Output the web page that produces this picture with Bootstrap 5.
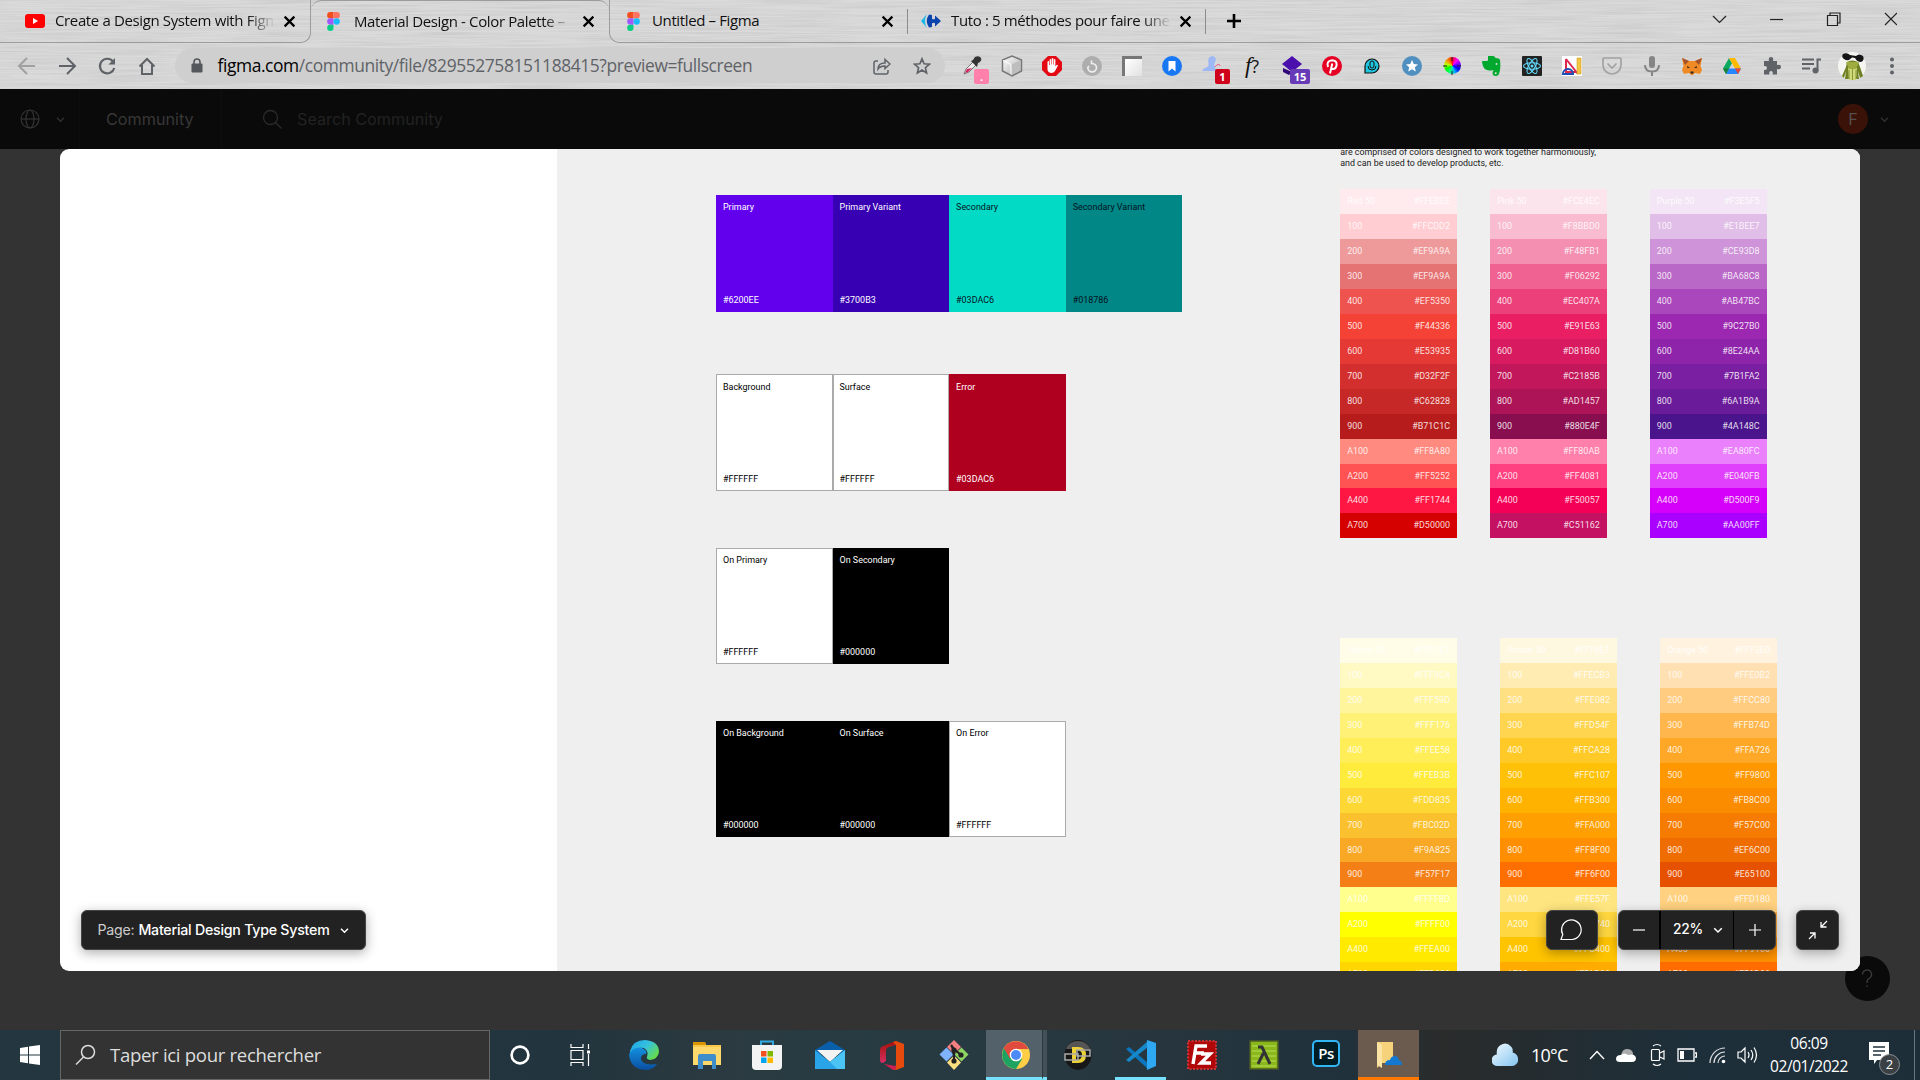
<!DOCTYPE html>
<html lang="fr">
<head>
<meta charset="utf-8">
<title>Material Design - Color Palette – Figma</title>
<link href="https://cdn.jsdelivr.net/npm/bootstrap@5.3.0/dist/css/bootstrap.min.css" rel="stylesheet">
<style>
body{width:1920px;height:1080px;overflow:hidden;background:#333;font-family:"Open Sans","Noto Sans",sans-serif;line-height:1}
svg{display:block;flex:none}
.no-shrink>*{flex:none}
.browser{height:89px;background:#dadada;isolation:isolate}
.metal{inset:0;z-index:-1}
.tabstrip{height:43px}
.tab{height:43px;border-bottom:1px solid #9c9c9c;font-size:15px;letter-spacing:-.37px;color:#111;white-space:nowrap}
.tab-prev{width:311px;border-right:1px solid #9c9c9c;border-bottom-right-radius:10px;padding-left:25px}
.tab-on{width:298px;border-top:1px solid #9c9c9c;border-bottom-color:transparent;border-radius:10px 10px 0 0;padding-left:16px}
.tab-next{width:299px;border-left:1px solid #9c9c9c;border-bottom-left-radius:10px;padding-left:13px}
.tab-last{width:298px;padding-left:13px}
.tab-fill{border-bottom:1px solid #9c9c9c;height:43px}
.tab-name{overflow:hidden;width:218px;height:24px;line-height:22px;margin-left:10px}
.fade-end{-webkit-mask-image:linear-gradient(90deg,#000 88%,transparent 101%)}
.tab-rule{width:1px;height:25px;background:#8c8c8c}
.toolbar{height:45px}
.slot{width:40px;height:40px;display:flex;align-items:center;justify-content:center;position:relative;flex:none}
.pill{width:770px;height:35px;border-radius:18px;background:#cfcfcf;font-size:17.4px;letter-spacing:-.4px;color:#5f6368}
.ext-badge{position:absolute;left:22px;top:23px;height:15px;border-radius:2px;color:#fff;font:bold 11px/15px "Open Sans",sans-serif;text-align:center}
.fignav{height:60px;background:#0a0a0a;font-family:Inter,sans-serif;font-size:16.2px;color:#303030}
.fignav .nav-rule{width:1px;height:60px;background:#0e0e0e}
.face{width:30px;height:30px;border-radius:50%;background:#3b1208;color:#55504e}
.stage{height:881px}
.help{position:absolute;left:1844.5px;top:807px;width:45px;height:45px;border-radius:50%;background:#0a0a0a}
.viewer{width:1800px;height:822px;margin-left:60px;background:#fff;border-radius:9px;overflow:hidden;font-family:Roboto,sans-serif;font-size:8.95px}
.blank{width:497px}
.sheet{background:#efefef;padding-left:159.3px;flex:1}
.swatches{width:466px;padding-top:46.3px;margin-right:157.9px}
.sw{width:116.55px;height:116.7px;padding:8.2px 6.7px 7.5px}
.sw-line{box-shadow:inset 0 0 0 1px #aaa}
.gap-a{margin-bottom:62.4px}.gap-b{margin-bottom:56.5px}
.intro{margin-top:-1.6px;line-height:10.4px;font-size:8.9px;color:#222;white-space:nowrap}
.pal{width:116.8px;color:rgba(255,255,255,.86)}
.spread>.pal:last-child{margin-left:10px}
.tone{height:24.95px;padding:0 7px;line-height:24.7px;display:flex;justify-content:space-between}
.float-btn{position:absolute;top:761px;height:40px;background:#222;border-radius:6px;border:1px solid #454545;box-shadow:0 3px 12px rgba(0,0,0,.32);color:#fff;font-family:Inter,sans-serif;font-size:14.2px}
.float-btn .cell{height:38px;display:flex;align-items:center;justify-content:center}
.zoom-cell{width:75px;border:solid #000;border-width:0 1px 0 2px;padding-left:4px;font-size:13.8px;font-weight:500;letter-spacing:-.3px}
.taskbar{height:50px;background:linear-gradient(90deg,#243740 0,#22343d 30%,#2b3a40 37%,#273b43 45%,#27363e 60%,#20313c 70%,#2a2c2b 75%,#242c30 80%,#1d2f3a 88%,#1e2e38 100%);color:#fff}
.find{width:430px;height:50px;background:#333;border:1px solid #666;font-size:18.6px;letter-spacing:-.32px;color:#ddd}
.app{width:62px;height:50px;display:flex;align-items:center;justify-content:center;flex:none}
.app-on{border-bottom:3px solid #76e0ff;padding-top:3px}
.tray{height:50px;position:relative}
.tray>svg,.tray>span{flex:none}
.clock{width:90px;font-size:15.5px;line-height:23px;letter-spacing:-.45px}
.count{position:absolute;left:10px;top:12px;width:21px;height:21px;border-radius:50%;background:#3a4044;border:1px solid #8b9094;font-size:13px;line-height:19px;text-align:center}
</style>
<script src="https://cdn.jsdelivr.net/npm/bootstrap@5.3.0/dist/js/bootstrap.bundle.min.js"></script>
</head>
<body class="d-flex flex-column">

<svg width="0" height="0" class="position-absolute">
  <defs>
    <symbol id="figma" viewBox="0 0 20 30"><path fill="#f24e1e" d="M10 0H5a5 5 0 0 0 0 10h5z"/><path fill="#ff7262" d="M10 0h5a5 5 0 0 1 0 10h-5z"/><path fill="#a259ff" d="M10 10H5a5 5 0 0 0 0 10h5z"/><circle cx="15" cy="15" r="5" fill="#1abcfe"/><path fill="#0acf83" d="M5 20h5v5a5 5 0 1 1-5-5z"/></symbol>
    <symbol id="cross" viewBox="0 0 12 12"><path d="M1.500 1.500l9 9M10.500 1.500l-9 9" stroke="#000" stroke-width="2" fill="none"/></symbol>
    <symbol id="chev" viewBox="0 0 10 10"><path d="M2.300 3.700L5 6.400l2.700-2.700" stroke="currentColor" stroke-width="1.100" fill="none"/></symbol>
    <filter id="brushed" x="0" y="0" width="100%" height="100%"><feTurbulence type="fractalNoise" baseFrequency="0.012 0.55" numOctaves="3" seed="4"/><feColorMatrix values="0 0 0 0 .5  0 0 0 0 .5  0 0 0 0 .5  .9 0 0 0 -.3"/></filter>
    <linearGradient id="edgeA" x1="0" y1="0" x2="1" y2=".6"><stop offset="0" stop-color="#1ba4e8"/><stop offset=".55" stop-color="#35c2df"/><stop offset="1" stop-color="#63dc50"/></linearGradient>
    <linearGradient id="edgeB" x1="0" y1="0" x2="0" y2="1"><stop offset="0" stop-color="#1490df"/><stop offset="1" stop-color="#0a4ea0"/></linearGradient>
    <linearGradient id="cube" x1="0" y1="0" x2="1" y2="1"><stop offset="0" stop-color="#fff"/><stop offset="1" stop-color="#aaa"/></linearGradient>
    <linearGradient id="sky" x1="0" y1="0" x2="1" y2="1"><stop offset="0" stop-color="#f4fbff"/><stop offset="1" stop-color="#83c4f0"/></linearGradient>
    <linearGradient id="off" x1="0" y1="0" x2="0" y2="1"><stop offset="0" stop-color="#a41208"/><stop offset="1" stop-color="#d62f64"/></linearGradient>
  </defs>
</svg>

<header class="browser position-relative flex-shrink-0">
  <svg class="metal position-absolute" width="1920" height="89"><rect width="1920" height="89" filter="url(#brushed)"/></svg>

  <div class="tabstrip d-flex align-items-center no-shrink">
    <div class="tab tab-prev d-flex align-items-center">
      <svg width="20" height="14" viewBox="0 0 20 14"><rect width="20" height="14" rx="3" fill="#f00"/><path d="M8 4l5 3-5 3z" fill="#fff"/></svg>
      <span class="tab-name fade-end">Create a Design System with Figma</span>
      <svg width="13" height="13" style="margin-left:10px"><use href="#cross"/></svg>
    </div>
    <div class="tab tab-on d-flex align-items-center">
      <svg width="13" height="19"><use href="#figma"/></svg>
      <span class="tab-name fade-end" style="width:216px;margin-left:14px">Material Design - Color Palette –</span>
      <svg width="13" height="13" style="margin-left:12px"><use href="#cross"/></svg>
    </div>
    <div class="tab tab-next d-flex align-items-center">
      <svg class="ms-1" width="13" height="19"><use href="#figma"/></svg>
      <span class="tab-name ms-2 ps-1">Untitled – Figma</span>
      <svg width="13" height="13" style="margin-left:15px"><use href="#cross"/></svg>
      <span class="tab-rule ms-auto"></span>
    </div>
    <div class="tab tab-last d-flex align-items-center">
      <svg width="20" height="14" viewBox="0 0 20 14"><path d="M6 0L0 7l6 7q-4-7 0-14z" fill="#1ab7ea"/><path d="M8 .5q-4.500 6.500 0 13l3-.5V9.200q2-1 3 0v3.300l6-5.500-6-5.500v3.300q-1 1-3 0V1z" fill="#0b44ad"/></svg>
      <span class="tab-name fade-end">Tuto : 5 méthodes pour faire une c</span>
      <svg width="13" height="13" style="margin-left:10px"><use href="#cross"/></svg>
      <span class="tab-rule ms-auto"></span>
    </div>
    <div class="tab-fill flex-grow-1 d-flex align-items-center">
      <svg width="16" height="16" style="margin-left:20px"><path d="M8 1v14M1 8h14" stroke="#000" stroke-width="2.600"/></svg>
      <svg class="ms-auto" width="200" height="30" style="margin-right:23px;margin-bottom:4px" fill="none" stroke="#222" stroke-width="1.200"><path d="M16 12l6.500 6.500 6.500-6.500"/><path d="M73 15.500h13"/><path d="M130.500 11.500h10v10h-10zM133 11.500v-2.500h10v10h-2.500"/><path d="M188 9l12 12M200 9L188 21"/></svg>
    </div>
  </div>

  <div class="toolbar d-flex align-items-center no-shrink">
    <div class="d-flex" style="margin-left:7px">
      <span class="slot"><svg width="20" height="20" fill="none" stroke="#a0a0a0" stroke-width="2"><path d="M18 10H3M10 2l-8 8 8 8"/></svg></span>
      <span class="slot"><svg width="20" height="20" fill="none" stroke="#5f6368" stroke-width="2"><path d="M2 10h15M10 2l8 8-8 8"/></svg></span>
      <span class="slot"><svg width="20" height="20" fill="none" stroke="#5f6368" stroke-width="2.200"><path d="M16 5.500A7.300 7.300 0 1 0 17.300 12"/><path d="M18 2v6.500h-6.500z" fill="#5f6368" stroke="none"/></svg></span>
      <span class="slot"><svg width="18" height="18" fill="none" stroke="#5f6368" stroke-width="2"><path d="M1.500 9.500L9 2l7.500 7.500M4 8v9h10V8"/></svg></span>
    </div>
    <div class="pill d-flex align-items-center ms-2">
      <svg width="12" height="15" style="margin-left:16px"><path d="M3 6V4a3 3 0 0 1 6 0v2" fill="none" stroke="#54575c" stroke-width="1.600"/><rect x=".5" y="5.500" width="11" height="9" rx="1" fill="#54575c"/></svg>
      <span class="text-nowrap" style="margin-left:14.500px"><span class="text-black">figma.com</span>/community/file/829552758151188415?preview=fullscreen</span>
      <span class="ms-auto d-flex" style="margin-right:3px"><span class="slot"><svg width="18" height="18" fill="none" stroke="#5f6368" stroke-width="1.500"><path d="M5 4H3a2 2 0 0 0-2 2v9a2 2 0 0 0 2 2h10a2 2 0 0 0 2-2v-2M5 12c0-4 3-6 7-6V2.500l5 4.500-5 4.500V9c-3 0-5 0-7 3z"/></svg></span>
      <span class="slot"><svg width="18" height="18" fill="none" stroke="#5f6368" stroke-width="1.700"><path d="M9 1.800l2.100 5 5.300.4-4 3.500 1.200 5.200L9 13.100l-4.600 2.800 1.200-5.200-4-3.500 5.300-.4z"/></svg></span></span>
    </div>
    <div class="d-flex" style="margin-left:7px">
      <span class="slot"><svg width="20" height="20"><path d="M2 18l2-5 7-7 3 3-7 7z" fill="#eee" stroke="#777"/><path d="M3 17l2-4 5-1-4 4z" fill="#d6215c"/><path d="M9 5l2-1 2-3q4-2 6 1 1 2-1 4l-2 1-1 4z" fill="#333"/></svg><span class="ext-badge" style="width:15px;background:#ff80ab">.</span></span>
      <span class="slot"><svg width="22" height="22"><path d="M11 1l9.500 4v11L11 21l-9.500-5V5z" fill="url(#cube)" stroke="#777" stroke-width="1.500"/><path d="M10 9.500l9.500-4v10L10 20z" fill="#bdbdbd"/><path d="M2 5.500l8 4v10" stroke="#fff" fill="none"/></svg></span>
      <span class="slot"><svg width="20" height="20"><path d="M6 0h8l6 6v8l-6 6H6l-6-6V6z" fill="#e30b13"/><path d="M5.500 10V5.500q1-1 1.500 0V9h.6V3.500q.9-1 1.600 0V8.500h.5V2.600q.9-1 1.600 0v6h.5v-5q1-1 1.600 0v7l1.500-1.800q1.500 0 .8 1.200L13 15q-1 2-4 2-3.500-.5-3.500-4z" fill="#fff"/></svg></span>
      <span class="slot"><svg width="20" height="20"><circle cx="10" cy="10" r="10" fill="#adadad"/><path d="M9.500 4.500v3q5 .5 5 4a4.300 4.300 0 0 1-8.700 0L7 10" fill="none" stroke="#eee" stroke-width="1.700"/></svg></span>
      <span class="slot"><svg width="20" height="20"><path d="M0 0h20v3H3v17H0z" fill="#777"/><rect x="3" y="3" width="17" height="17" fill="url(#cube)"/><rect x="3" y="3" width="17" height="17" fill="#fff" opacity=".65"/></svg></span>
      <span class="slot"><svg width="20" height="20"><circle cx="10" cy="10" r="10" fill="#1877f2"/><path d="M6.500 5h7v10.500L10 12.500l-3.500 3z" fill="#fff"/></svg></span>
      <span class="slot"><svg width="20" height="20"><path d="M10 0q5 1 3.500 5-2 4-.5 6l1 4H0q1-3 4-3.500Q7 11 6.500 8 5 1 10 0z" fill="#9db8f5"/><path d="M13 11q4-5 5-1" fill="none" stroke="#e58"/></svg><span class="ext-badge" style="left:23px;width:15px;background:#d0021b">1</span></span>
      <span class="slot" style="font:italic 23px/1 'Liberation Serif',serif;color:#111">f<span style="font:18px/1 'Open Sans',sans-serif">?</span></span>
      <span class="slot"><svg width="20" height="20"><path d="M10 0l10 8-10 8L0 8z" fill="#4b0fae"/><path d="M1 12l9 4-3 3-6-3z" fill="#31087c"/></svg><span class="ext-badge" style="left:18px;width:20px;background:#673ab7">15</span></span>
      <span class="slot"><svg width="20" height="20"><circle cx="10" cy="10" r="10" fill="#e60023"/><path d="M6 11Q4 5 10 4.200q5 .3 4.600 4.800-.6 4-3.600 4-1.500 0-2-1M10.300 7.500L8 17.500" stroke="#fff" stroke-width="2" fill="none"/></svg></span>
      <span class="slot"><svg width="16" height="16"><path d="M1 15V8a7 7 0 1 1 7 7z" fill="#21c5df" stroke="#111" stroke-width="1.200"/><rect x="6" y="3" width="4" height="7" rx="2" fill="none" stroke="#111"/><path d="M4 8q0 4 4 4t4-4" fill="none" stroke="#111"/></svg></span>
      <span class="slot"><svg width="20" height="20"><circle cx="10" cy="10" r="10" fill="#5090c0"/><path d="M10 4l1.800 4 4.200.4-3.200 2.800 1 4.300L10 13.300l-3.800 2.200 1-4.300L4 8.400 8.200 8z" fill="#fff"/></svg></span>
      <span class="slot"><span class="rounded-circle" style="width:17px;height:17px;background:conic-gradient(#f03,#f0f,#60f,#00f,#0af,#0f8,#0f0,#bf0,#f80,#f00)"></span><svg class="position-absolute" width="20" height="20"><path d="M10 1v4M10 15v4M1 10h4M15 10h4" stroke="#222"/></svg></span>
      <span class="slot"><svg width="20" height="20"><path d="M6 0h5q2 0 2.500 2 4 0 4.500 2 1 8-1 14-1 2-3 2-3.500 0-3.500-3.500 0-2 2.500-2v2q-1 0 0 1.400 1.500 1 2-1.500-3 .5-4-2.400Q9 15 5 14 1 13 0 6q0-1 1-1h4q1 0 1-1z" fill="#00a82d"/><circle cx="14.500" cy="8" r="1" fill="#d9d9d9"/></svg></span>
      <span class="slot"><svg width="20" height="20"><rect width="20" height="20" rx="1" fill="#222"/><g fill="none" stroke="#61dafb" stroke-width="1.100"><ellipse cx="10" cy="10" rx="8.500" ry="3.200"/><ellipse cx="10" cy="10" rx="8.500" ry="3.200" transform="rotate(60 10 10)"/><ellipse cx="10" cy="10" rx="8.500" ry="3.200" transform="rotate(120 10 10)"/></g><circle cx="10" cy="10" r="1.500" fill="#61dafb"/></svg></span>
      <span class="slot"><svg width="20" height="20"><path d="M0 0h20v20H0z" fill="#fff"/><path d="M4 3l12 15M4 3v13h10" stroke="#e0284f" stroke-width="2" fill="none"/><path d="M1 18a5 5 0 0 1 10 0z" fill="none" stroke="#1c4fb5" stroke-width="2"/><path d="M15 2h4v16h-4z" fill="#f4c542" stroke="#c99a20" stroke-width=".6"/></svg></span>
      <span class="slot"><svg width="20" height="18" fill="none" stroke="#a2a2a2" stroke-width="1.700"><path d="M1 2q0-1 1-1h16q1 0 1 1v6a9 9 0 0 1-18 0zM5.500 6.500L10 11l4.500-4.500"/></svg></span>
      <span class="slot"><svg width="16" height="20"><rect x="5" y="0" width="6" height="12" rx="3" fill="#858585"/><path d="M1 9q0 6.500 7 6.500T15 9M8 15v5" stroke="#858585" stroke-width="2" fill="none"/></svg></span>
      <span class="slot"><svg width="20" height="18"><path d="M0 1l7 3h6l7-3-1.500 8 1.500 4-2 4-5-1-2 2H9l-2-2-5 1-2-4 1.500-4z" fill="#f08a24"/><path d="M0 1l7 3-4 4zM20 1l-7 3 4 4z" fill="#a5532a"/><path d="M5 9l3 1.500-2.500.8zM15 9l-3 1.500 2.500.8zM8.500 14.500h3v2h-3z" fill="#322"/></svg></span>
      <span class="slot"><svg width="18" height="16" viewBox="0 0 18 16"><path d="M6 0L0 10.500 3 16 9 5.300z" fill="#0da960"/><path d="M6 0h6l6 10.500h-6z" fill="#ffba00"/><path d="M3 16l3-5.500h12L15 16z" fill="#2684fc"/><path d="M6 10.500L3 16l-3-5.500z" fill="#188038"/><path d="M12 10.500h6L15 16z" fill="#ea4335"/></svg></span>
      <span class="slot"><svg width="18" height="18"><path d="M1 4h5q-1-4 2-4t2 4h4v4q4-1 4 2t-4 2v5.500H9.500q1-3.500-1.500-3.500t-1.500 3.500H1V13q3 .5 3-2T1 9z" fill="#5f6368"/></svg></span>
      <span class="slot"><svg width="20" height="16"><path d="M0 1.500h12M0 6h12M0 10.500h8" stroke="#5f6368" stroke-width="2"/><path d="M15.500 13V1.500H19" stroke="#5f6368" stroke-width="2" fill="none"/><circle cx="13.500" cy="12.500" r="3" fill="#5f6368"/></svg></span>
      <span class="slot"><svg width="28" height="28"><circle cx="14" cy="14" r="14" fill="#f4f4f0"/><path d="M9 10q5-3 11 0l2 5 3 9-3 2-2-7 1 8H7l1-8-2 7-2-2 4-9z" fill="#6f8122"/><path d="M10 16h9l-1 12h-7z" fill="#cfd779"/><path d="M11 18v9M14.500 17v11M18 18v9" stroke="#8a9a3a"/><path d="M8 10h13l-3 7h-7z" fill="#9fac40"/><path d="M5 2q4-2 7 1l6 1q3-3 7 0 2 4-2 6-4 0-6-4l-3-.5Q10 10 6 7 3 5 5 2z" fill="#151515"/></svg></span>
      <span class="slot"><svg width="4" height="18" fill="#5f6368"><circle cx="2" cy="2.500" r="2"/><circle cx="2" cy="9" r="2"/><circle cx="2" cy="15.500" r="2"/></svg></span>
    </div>
  </div>
</header>

<nav class="fignav d-flex align-items-center flex-shrink-0 no-shrink">
  <svg width="20" height="20" style="margin-left:20px" fill="none" stroke="#333" stroke-width="1.200"><circle cx="10" cy="10" r="9"/><ellipse cx="10" cy="10" rx="4" ry="9"/><path d="M1 10h18"/></svg>
  <svg width="13" height="13" style="margin-left:14px"><use href="#chev"/></svg>
  <span class="nav-rule" style="margin-left:12px"></span>
  <span style="margin-left:26px;width:115px;color:#383838">Community</span>
  <span class="nav-rule"></span>
  <svg width="20" height="20" style="margin-left:40px" fill="none" stroke="#2b2b2b" stroke-width="1.300"><circle cx="8.500" cy="8.500" r="7"/><path d="M13.500 13.500l6 6"/></svg>
  <span style="margin-left:15px;color:#222">Search Community</span>
  <span class="face d-flex align-items-center justify-content-center ms-auto">F</span>
  <svg width="13" height="13" style="margin:0 29px 0 10px"><use href="#chev"/></svg>
</nav>

<main class="stage position-relative flex-shrink-0">
  <div class="help d-flex align-items-center justify-content-center"><svg width="12" height="20" fill="none" stroke="#3c3c3c" stroke-width="1.300"><path d="M1.500 5.500A4.500 4.500 0 1 1 8 9.500Q6 10.500 6 14M6 16.500v1.500"/></svg></div>

  <section class="viewer position-relative d-flex">
    <div class="blank"></div>
    <div class="sheet d-flex">
      <div class="swatches flex-shrink-0" id="swatches"></div>
      <div class="flex-shrink-0">
        <p class="intro mb-0">are comprised of colors designed to work together harmoniously,<br>and can be used to develop products, etc.</p>
        <div class="d-flex spread" id="warm" style="margin-top:21px;gap:33px"></div>
        <div class="d-flex" id="sunny" style="margin-top:99.700px;gap:43.200px"></div>
      </div>
    </div>

    <div class="float-btn d-flex align-items-center text-nowrap" style="left:21px;width:285px;padding-left:15.500px;letter-spacing:-.24px">
      <span style="color:#ccc">Page:</span><span class="ms-1" style="font-weight:500">Material Design Type System</span>
      <svg width="13" height="13" style="margin-left:8px"><use href="#chev"/></svg>
    </div>
    <div class="float-btn" style="left:1486px;width:52px"><div class="cell" style="padding-right:2px"><svg width="24" height="24" fill="none" stroke="#fff" stroke-width="1.200"><path d="M2 21.500h11A9.800 9.800 0 1 0 3.800 16.500z"/></svg></div></div>
    <div class="float-btn d-flex" style="left:1558px;width:158px">
      <div class="cell" style="width:40px"><svg width="12" height="12"><path d="M0 6h12" stroke="#fff" stroke-width="1.200"/></svg></div>
      <div class="cell zoom-cell">22%<svg width="14" height="14" style="margin-left:8px"><use href="#chev"/></svg></div>
      <div class="cell flex-grow-1"><svg width="12" height="12"><path d="M0 6h12M6 0v12" stroke="#fff" stroke-width="1.200"/></svg></div>
    </div>
    <div class="float-btn" style="left:1736px;width:43px"><div class="cell"><svg width="20" height="20" fill="none" stroke="#fff" stroke-width="1.300"><path d="M19 1l-6 6M13 2v5h5.500M1 19l6-6M2 13h5v5.500"/></svg></div></div>
  </section>
</main>

<footer class="taskbar d-flex align-items-center flex-shrink-0 no-shrink">
  <div class="app" style="width:60px"><svg width="20" height="20" fill="#fff"><path d="M0 3l8-1.200v7.700H0zM9 1.600L20 0v9.500H9zM0 10.500h8v7.700L0 17zM9 10.500h11V20L9 18.400z"/></svg></div>
  <div class="find d-flex align-items-center"><svg width="22" height="22" style="margin-left:14px" fill="none" stroke="#ddd" stroke-width="1.500"><circle cx="13" cy="8" r="6.500"/><path d="M8.500 13L1 20.500"/></svg><span style="margin-left:13px">Taper ici pour rechercher</span></div>
  <div class="app" style="width:60px"><svg width="20" height="20"><circle cx="10" cy="10" r="8.400" fill="none" stroke="#fff" stroke-width="2.600"/></svg></div>
  <div class="app" style="width:60px"><svg width="20" height="24" fill="none" stroke="#fff" stroke-width="1.200"><path d="M1 1v3.500h12V1M1 23v-3.500h12V23M1 7.500h12v9H1zM18.500 1v5M18.500 11v12"/><path d="M17 7.500h3v3h-3z" fill="#fff" stroke="none"/></svg></div>
  <div class="app" style="width:67px"><svg width="30" height="30"><path d="M1 11Q4 0 16 0q14 1 14 12-1 7-9 8-4-1-3-3 2-6-3-9-8-2-14 7z" fill="url(#edgeA)"/><path d="M0 14Q5 6 13 8q6 3 4 6-5 0-5 5 1 7 16 5-4 6-12 6Q1 29 0 14z" fill="url(#edgeB)"/></svg></div>
  <div class="app" style="width:59px"><svg width="28" height="28"><path d="M0 2q0-1 1-1h11l1 3h15v20H0z" fill="#f8c74b"/><path d="M0 1h12l1 3H0z" fill="#d99500"/><path d="M0 6h28v18H0z" fill="#ffd86b"/><path d="M5 28V15q0-2 2-2h14q2 0 2 2v13h-4v-8h-9v8z" fill="#3f8ecb"/></svg></div>
  <div class="app"><svg width="30" height="30"><path d="M9 7V1.500h12V7" fill="none" stroke="#32a9df" stroke-width="2"/><path d="M0 5h30v21q0 4-4 4H4q-4 0-4-4z" fill="#f3f3f3"/><path fill="#f25022" d="M9 11h5.500v5.500H9z"/><path fill="#7fba00" d="M15.500 11H21v5.500h-5.500z"/><path fill="#00a4ef" d="M9 17.500h5.500V23H9z"/><path fill="#ffb900" d="M15.500 17.500H21V23h-5.500z"/></svg></div>
  <div class="app" style="width:63px"><svg width="30" height="28"><path d="M0 9L15 0l15 9v4H0z" fill="#0a5faa"/><path d="M2 9h26L15 21z" fill="#f3f3f3"/><path d="M0 9l15 12L30 9v19H0z" fill="#29a4e8"/><path d="M15 21L30 9v19H22z" fill="#4bc4f5"/></svg></div>
  <div class="app"><svg width="24" height="29"><path d="M16 0L3 5q-3 1-3 4v10q0 3 3 3l3-2V10q0-3 3-4l7-2z" fill="url(#off)"/><path d="M13 1l3-1 8 3v23l-8 3-4-1q4-1 4-5V4z" fill="#e64a0c"/><path d="M4 23l12 2v3l-3 1z" fill="#cc2050"/></svg></div>
  <div class="app"><svg width="30" height="30"><path d="M15 0l7 7-7 7-7-7z" fill="#f57f82"/><path d="M7.500 7.500l7 7-7 7-7-7z" fill="#80b3ff"/><path d="M22.500 7.500l7 7-7 7-7-7z" fill="#8fd363"/><path d="M15 15.500l7 7L15 30l-7-7.500z" fill="#ffe080"/><path d="M12 5l3 4v12M15 9l7 6" stroke="#222" stroke-width="2.200"/><circle cx="15" cy="10" r="2.600" fill="#222"/><circle cx="22" cy="15" r="2.600" fill="#222"/><circle cx="15" cy="21" r="2.600" fill="#222"/></svg></div>
  <div class="app app-on" style="margin-left:1px;width:56px;padding-left:3px;background:#53626a"><svg width="28" height="28" viewBox="0 0 28 28"><circle cx="14" cy="14" r="14" fill="#ffcd46"/><path d="M2 7a14 14 0 0 0 12 21l6-10-6-4z" fill="#1da462"/><path d="M1.800 7l6 10.500L14 8h12.300A14 14 0 0 0 1.800 7z" fill="#e04a3f"/><circle cx="14" cy="14" r="6.300" fill="#fff"/><circle cx="14" cy="14" r="5" fill="#4c8bf5"/></svg></div>
  <div class="app app-on" style="width:5px;background:#435057;border-left:1px solid #2b3940"></div>
  <div class="app"><svg width="28" height="30"><ellipse cx="14" cy="15" rx="13.500" ry="15" fill="#171717"/><path d="M2 9q3-8 12-8t12 8z" fill="#555"/><path d="M8 7h6q8 0 8 8t-8 8H8zM12 10v10q6 0 6-5t-6-5z" fill="#ecd038" fill-rule="evenodd"/><path d="M1 14h13v6H1zM13 10h13v6H13z" fill="none" stroke="#aaa" stroke-width="1.500"/></svg></div>
  <div class="app app-on" style="width:51px;margin:0 5px 0 6px"><svg width="30" height="30"><path d="M0 9l3-2 19 16v6z" fill="#0b76bd"/><path d="M0 20l3 2L22 7V1z" fill="#1688cc"/><path d="M21 0l9 3v23l-9 4z" fill="#2fa8f3"/></svg></div>
  <div class="app"><svg width="30" height="30"><rect x="1" y="1" width="28" height="28" fill="#b00808" stroke="#c93434" stroke-width="2" stroke-dasharray="2 1.500"/><path d="M6 24L9 6h11M8 13h9M14 14h9l-9 9h10" stroke="#fff" stroke-width="3.400" fill="none"/></svg></div>
  <div class="app"><svg width="30" height="30"><rect x="1" y="1" width="28" height="28" fill="#8ab81b" stroke="#4b5a26" stroke-width="1.500"/><path d="M3 6h24M3 11h24M3 16h24M3 21h24M3 26h24" stroke="#b9dc5c"/><path d="M9 7h4l8 17M14.500 13L9 24" stroke="#333" stroke-width="3" fill="none"/></svg></div>
  <div class="app" style="padding-bottom:3px"><span class="d-flex align-items-center justify-content-center fw-semibold" style="width:28px;height:27px;border:2px solid #31b5f4;border-radius:5px;background:#001d26;font-size:15px;letter-spacing:-.5px">Ps</span></div>
  <div class="app app-on" style="width:61px;margin-left:1px;background:#6b5a4e;border-color:#ff7800"><svg width="26" height="28"><path d="M1 1h16v21H6L1 27z" fill="#f6d27b"/><path d="M1 1l5 3v23l-5-3z" fill="#fbe4a3"/><path d="M9 24q0-5 5-5 1-4 5-4 3 0 4 4 3 1 3 5z" fill="#1378d0"/></svg></div>

  <div class="tray d-flex align-items-center ms-auto no-shrink" style="width:428px">
    <svg width="27" height="24" viewBox="0 0 28 25" style="margin-right:12px"><path d="M6 24a6 6 0 0 1-1-12Q4 5 9 2q6-4 11 2 2 2 1.500 6Q28 12 27 19q-1 4-6 5z" fill="url(#sky)"/></svg>
    <span style="width:54px;font-size:18px;letter-spacing:-.8px">10°C</span>
    <svg width="16" height="12" style="margin-left:4px"><path d="M1 10l7-7.500 7 7.500" fill="none" stroke="#fff" stroke-width="1.400"/></svg>
    <svg width="20" height="15" style="margin-left:11px"><path d="M5 8Q6 0 12 1t5 7z" fill="#aaa"/><path d="M4 14q-4 0-4-3 0-4 5-4 3-3 7 0 7-2 8 3 0 4-4 4z" fill="#fff"/></svg>
    <svg width="16" height="24" style="margin-left:13px" fill="none" stroke="#fff" stroke-width="1.200"><rect x="2.500" y="6.500" width="8" height="11" rx="1"/><path d="M11 10l4-2v8l-4-2M4 3q4-3 8 0M4 21q4 3 8 0"/></svg>
    <svg width="20" height="14" style="margin-left:12px"><path d="M1 1h16v12H1zM18 5h1.500v4H18" fill="none" stroke="#fff" stroke-width="1.300"/><path d="M3 3h4v8H3z" fill="#fff"/></svg>
    <svg width="17" height="17" style="margin-left:12px" fill="none" stroke="#ddd" stroke-width="1.200"><path d="M1 16A15 15 0 0 1 16 1M5 16A11 11 0 0 1 16 5M9 16a7 7 0 0 1 7-7"/><circle cx="14.500" cy="14.500" r="1.800" fill="#fff" stroke="none"/></svg>
    <svg width="22" height="18" style="margin-left:11px" fill="none" stroke="#fff" stroke-width="1.200"><path d="M1 6h3l4-4v14l-4-4H1zM11 6q2 3 0 6M14 4q3.500 5 0 10M17 1.500q5 7.500 0 15"/></svg>
    <span class="clock text-center" style="margin-left:5px"><span class="d-block">06:09</span><span class="d-block">02/01/2022</span></span>
    <span class="position-relative" style="margin-left:15px;width:22px;height:26px"><svg width="20" height="24"><path d="M0 0h20v18H8l-3 4v-4H0z" fill="#fff"/><path d="M4 5h12M4 9h12M4 13h8" stroke="#22323b" stroke-width="1.500"/></svg><span class="count">2</span></span>
    <span class="ms-auto" style="width:1px;height:50px;background:#68757c;margin-right:5px"></span>
  </div>
</footer>

<script>
// Theme swatches: [label, hex text, fill, text colour, outlined]
const themeRows = [
  [['Primary','#6200EE','#6200ee','#fff'],['Primary Variant','#3700B3','#3700b3','#fff'],['Secondary','#03DAC6','#03dac6','#012'],['Secondary Variant','#018786','#018786','#012']],
  [['Background','#FFFFFF','#fff','#000',1],['Surface','#FFFFFF','#fff','#000',1],['Error','#03DAC6','#b00020','#fff']],
  [['On Primary','#FFFFFF','#fff','#000',1],['On Secondary','#000000','#000','#fff']],
  [['On Background','#000000','#000','#fff'],['On Surface','#000000','#000','#fff'],['On Error','#FFFFFF','#fff','#000',1]]
];
document.getElementById('swatches').innerHTML = themeRows.map((row, i) =>
  `<div class="d-flex ${i ? 'gap-b' : 'gap-a'}">` + row.map(([n, h, bg, fg, line]) =>
    `<div class="sw d-flex flex-column justify-content-between flex-shrink-0${line ? ' sw-line' : ''}" style="background:${bg};color:${fg}"><span>${n}</span><span>${h}</span></div>`).join('') + '</div>').join('');

const steps = ['50','100','200','300','400','500','600','700','800','900','A100','A200','A400','A700'];
const warm = {
  Red:'FFEBEE FFCDD2 EF9A9A EF9A9A:E57373 EF5350 F44336 E53935 D32F2F C62828 B71C1C FF8A80 FF5252 FF1744 D50000',
  Pink:'FCE4EC F8BBD0 F48FB1 F06292 EC407A E91E63 D81B60 C2185B AD1457 880E4F FF80AB FF4081 F50057 C51162',
  Purple:'F3E5F5 E1BEE7 CE93D8 BA68C8 AB47BC 9C27B0 8E24AA 7B1FA2 6A1B9A 4A148C EA80FC E040FB D500F9 AA00FF'
};
const sunny = {
  Yellow:'FFFDE7 FFF9C4 FFF59D FFF176 FFEE58 FFEB3B FDD835 FBC02D F9A825 F57F17 FFFF8D FFFF00 FFEA00 FFD600',
  Amber:'FFF8E1 FFECB3 FFE082 FFD54F FFCA28 FFC107 FFB300 FFA000 FF8F00 FF6F00 FFE57F FFD740 FFC400 FFAB00',
  Orange:'FFF3E0 FFE0B2 FFCC80 FFB74D FFA726 FF9800 FB8C00 F57C00 EF6C00 E65100 FFD180 FFAB40 FF9100 FF6D00'
};
function palettes(id, set) {
  document.getElementById(id).innerHTML = Object.entries(set).map(([name, list]) =>
    '<div class="pal">' + list.split(' ').map((c, i) => {
      const [label, fill = label] = c.split(':');
      return `<div class="tone" style="background:#${fill}"><span>${i ? '' : name + ' '}${steps[i]}</span><span>#${label}</span></div>`;
    }).join('') + '</div>').join('');
}
palettes('warm', warm);
palettes('sunny', sunny);
</script>
</body>
</html>
